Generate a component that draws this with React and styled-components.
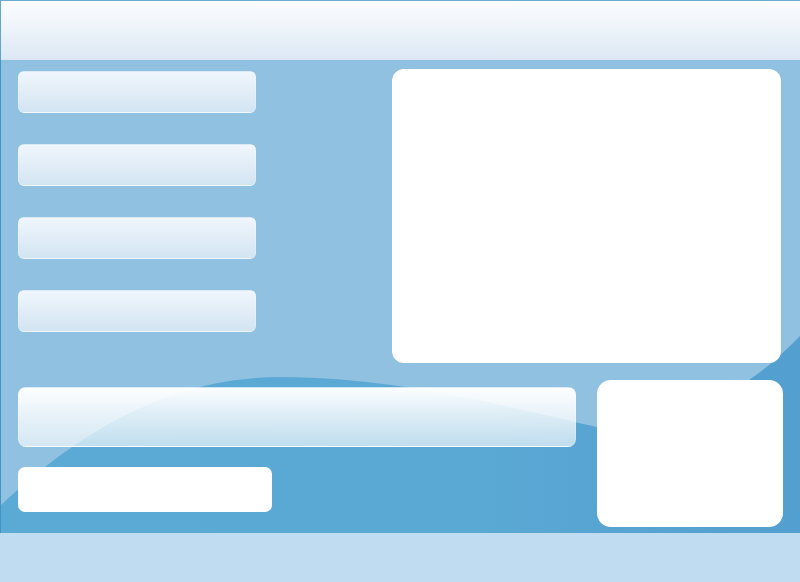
import React from 'react';
import styled, {createGlobalStyle} from "styled-components";

const GlobalStyle = createGlobalStyle`
  html, body {
    margin: 0;
    padding: 0;
    background: #ffffff;
    font-family: "Liberation Sans", Arial, sans-serif;
  }
`;

const Frame = styled.div`
  width: 800px;
  height: 582px;
  display: flex;
  flex-direction: column;
  overflow: hidden;
`;

const Header = styled.div`
  height: 59px;
  flex-shrink: 0;
  border-top: 1px solid #6caccf;
  border-left: 1px solid #5fa6cf;
  background: linear-gradient(180deg, #fbfdfe 0%, #eef4fa 45%, #dbe8f4 100%);
`;

const Body = styled.div`
  position: relative;
  height: 473px;
  flex-shrink: 0;
  display: flex;
  flex-direction: column;
  background: #91c1e1;
  border-left: 1px solid #3f95c6;
  box-sizing: border-box;
`;

const Wave = styled.svg`
  position: absolute;
  left: 0;
  top: 0;
  width: 800px;
  height: 473px;
  z-index: 0;
`;

const TopRow = styled.div`
  position: relative;
  z-index: 1;
  display: flex;
  justify-content: space-between;
  padding: 9px 19px 0 17px;
`;

const MenuColumn = styled.div`
  display: flex;
  flex-direction: column;
  gap: 31px;
  padding-top: 2px;
`;

const MenuButton = styled.div`
  width: 238px;
  height: 42px;
  border-radius: 6px;
  box-sizing: border-box;
  border: 1px solid rgba(255, 255, 255, 0.2);
  background: linear-gradient(180deg, #eff6fc 0%, #e2edf7 50%, #d2e4f2 100%);
`;

const Panel = styled.div`
  width: ${p => p.$w}px;
  height: ${p => p.$h}px;
  margin-top: ${p => p.$top || 0}px;
  border-radius: ${p => p.$r || 12}px;
  background: #ffffff;
`;

const BottomRow = styled.div`
  position: relative;
  z-index: 1;
  display: flex;
  justify-content: space-between;
  padding: 0 17px 0 17px;
`;

const BottomLeft = styled.div`
  display: flex;
  flex-direction: column;
`;

const GlassBar = styled.div`
  width: 558px;
  height: 60px;
  margin-top: 24px;
  border-radius: 8px;
  box-sizing: border-box;
  border: 1px solid rgba(255, 255, 255, 0.2);
  background: linear-gradient(180deg, rgba(255, 255, 255, 0.98) 0%, rgba(255, 255, 255, 0.8) 45%, rgba(255, 255, 255, 0.62) 100%);
`;

const InputBox = styled.div`
  width: 254px;
  height: 45px;
  margin-top: 20px;
  border-radius: 7px;
  background: #ffffff;
`;

const Footer = styled.div`
  flex: 1;
  background: #bfdcf0;
`;

const App = () => {
    return (
        <Frame>
            <GlobalStyle/>
            <Header/>
            <Body>
                <Wave viewBox="0 0 800 473">
                    <defs>
                        <linearGradient id="deep" x1="0" y1="0" x2="1" y2="0">
                            <stop offset="0" stopColor="#5aaad5"/>
                            <stop offset="0.6" stopColor="#5aa8d4"/>
                            <stop offset="1" stopColor="#539fcf"/>
                        </linearGradient>
                    </defs>
                    <path
                        d="M0,445 C70,380 160,317 280,317 C400,317 520,350 600,368 L740,325 C765,310 785,290 800,275 L800,473 L0,473 Z"
                        fill="url(#deep)"/>
                </Wave>
                <TopRow>
                    <MenuColumn>
                        {[0, 1, 2, 3].map(i => <MenuButton key={i}/>)}
                    </MenuColumn>
                    <Panel $w={389} $h={294} $r={12}/>
                </TopRow>
                <BottomRow>
                    <BottomLeft>
                        <GlassBar/>
                        <InputBox/>
                    </BottomLeft>
                    <Panel $w={186} $h={147} $top={17} $r={14}/>
                </BottomRow>
            </Body>
            <Footer/>
        </Frame>
    );
};

export default App;
